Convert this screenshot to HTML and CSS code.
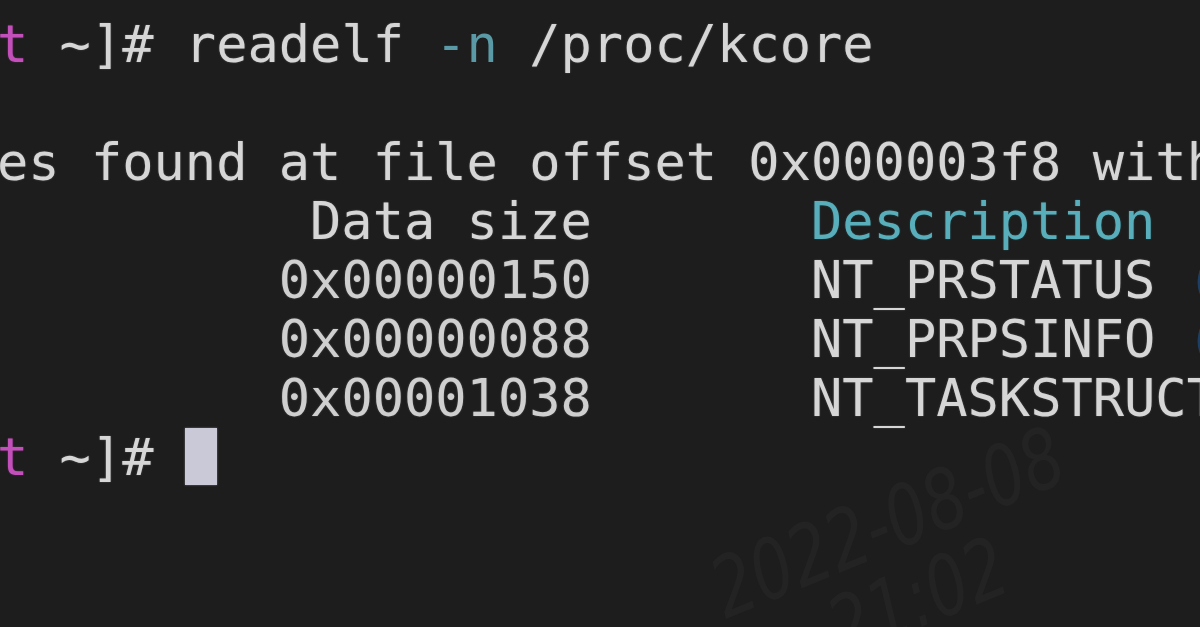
FILE: index.html
```html
<!DOCTYPE html>
<html lang="en">
<head>
<meta charset="utf-8">
<title>readelf -n /proc/kcore</title>
<link rel="stylesheet" href="styles.css">
</head>
<body>
<div class="term">
  <div class="screen">
    <div class="line"><span class="host">t</span> ~]# readelf <span class="opt">-n</span> /proc/kcore</div>
    <div class="line"> </div>
    <div class="line">es found at file offset 0x000003f8 with</div>
    <div class="line">          Data size       <span class="head">Description</span></div>
    <div class="line">         <span class="num">0x00000150</span>       NT_PRSTATUS <span class="paren">(</span></div>
    <div class="line">         <span class="num">0x00000088</span>       NT_PRPSINFO <span class="paren">(</span></div>
    <div class="line">         <span class="num">0x00001038</span>       NT_TASKSTRUCT</div>
    <div class="line"><span class="host">t</span> ~]# <span class="cursor"></span></div>
  </div>
  <div class="watermark">2022-08-08<br>21:02</div>
</div>
</body>
</html>
```

FILE: styles.css
```css
html, body {
  margin: 0;
  padding: 0;
  background: #1d1d1d;
}

.term {
  position: relative;
  width: 1200px;
  height: 627px;
  overflow: hidden;
  background: #1d1d1d;
}

.screen {
  padding-top: 15px;
  margin-left: -3px;
  font-family: "DejaVu Sans Mono", "Liberation Mono", monospace;
  font-size: 52px;
  line-height: 59px;
  color: #d6d6d6;
  text-shadow: 0 0 2px rgba(200, 200, 200, 0.35);
}

.line {
  height: 59px;
  white-space: pre;
}

.host {
  color: #c24fba;
  text-shadow: 0 0 2px rgba(194, 79, 186, 0.4);
}

.opt {
  color: #5a9aa6;
  text-shadow: none;
}

.head {
  color: #58aebb;
  text-shadow: 0 0 2px rgba(88, 174, 187, 0.35);
}

.num {
  color: #cfcfcf;
}

.paren {
  color: #1f3f62;
  text-shadow: none;
}

.cursor {
  display: inline-block;
  width: 32px;
  height: 57px;
  vertical-align: top;
  background: #c9c9d8;
  box-shadow: 0 0 2px rgba(201, 201, 216, 0.5);
}

.watermark {
  position: absolute;
  left: 700px;
  top: 555px;
  font-family: "DejaVu Sans", sans-serif;
  font-style: italic;
  font-size: 64px;
  line-height: 62px;
  color: #232323;
  text-align: center;
  transform: rotate(-22deg) scaleY(1.3);
  transform-origin: left top;
  white-space: nowrap;
}
```
